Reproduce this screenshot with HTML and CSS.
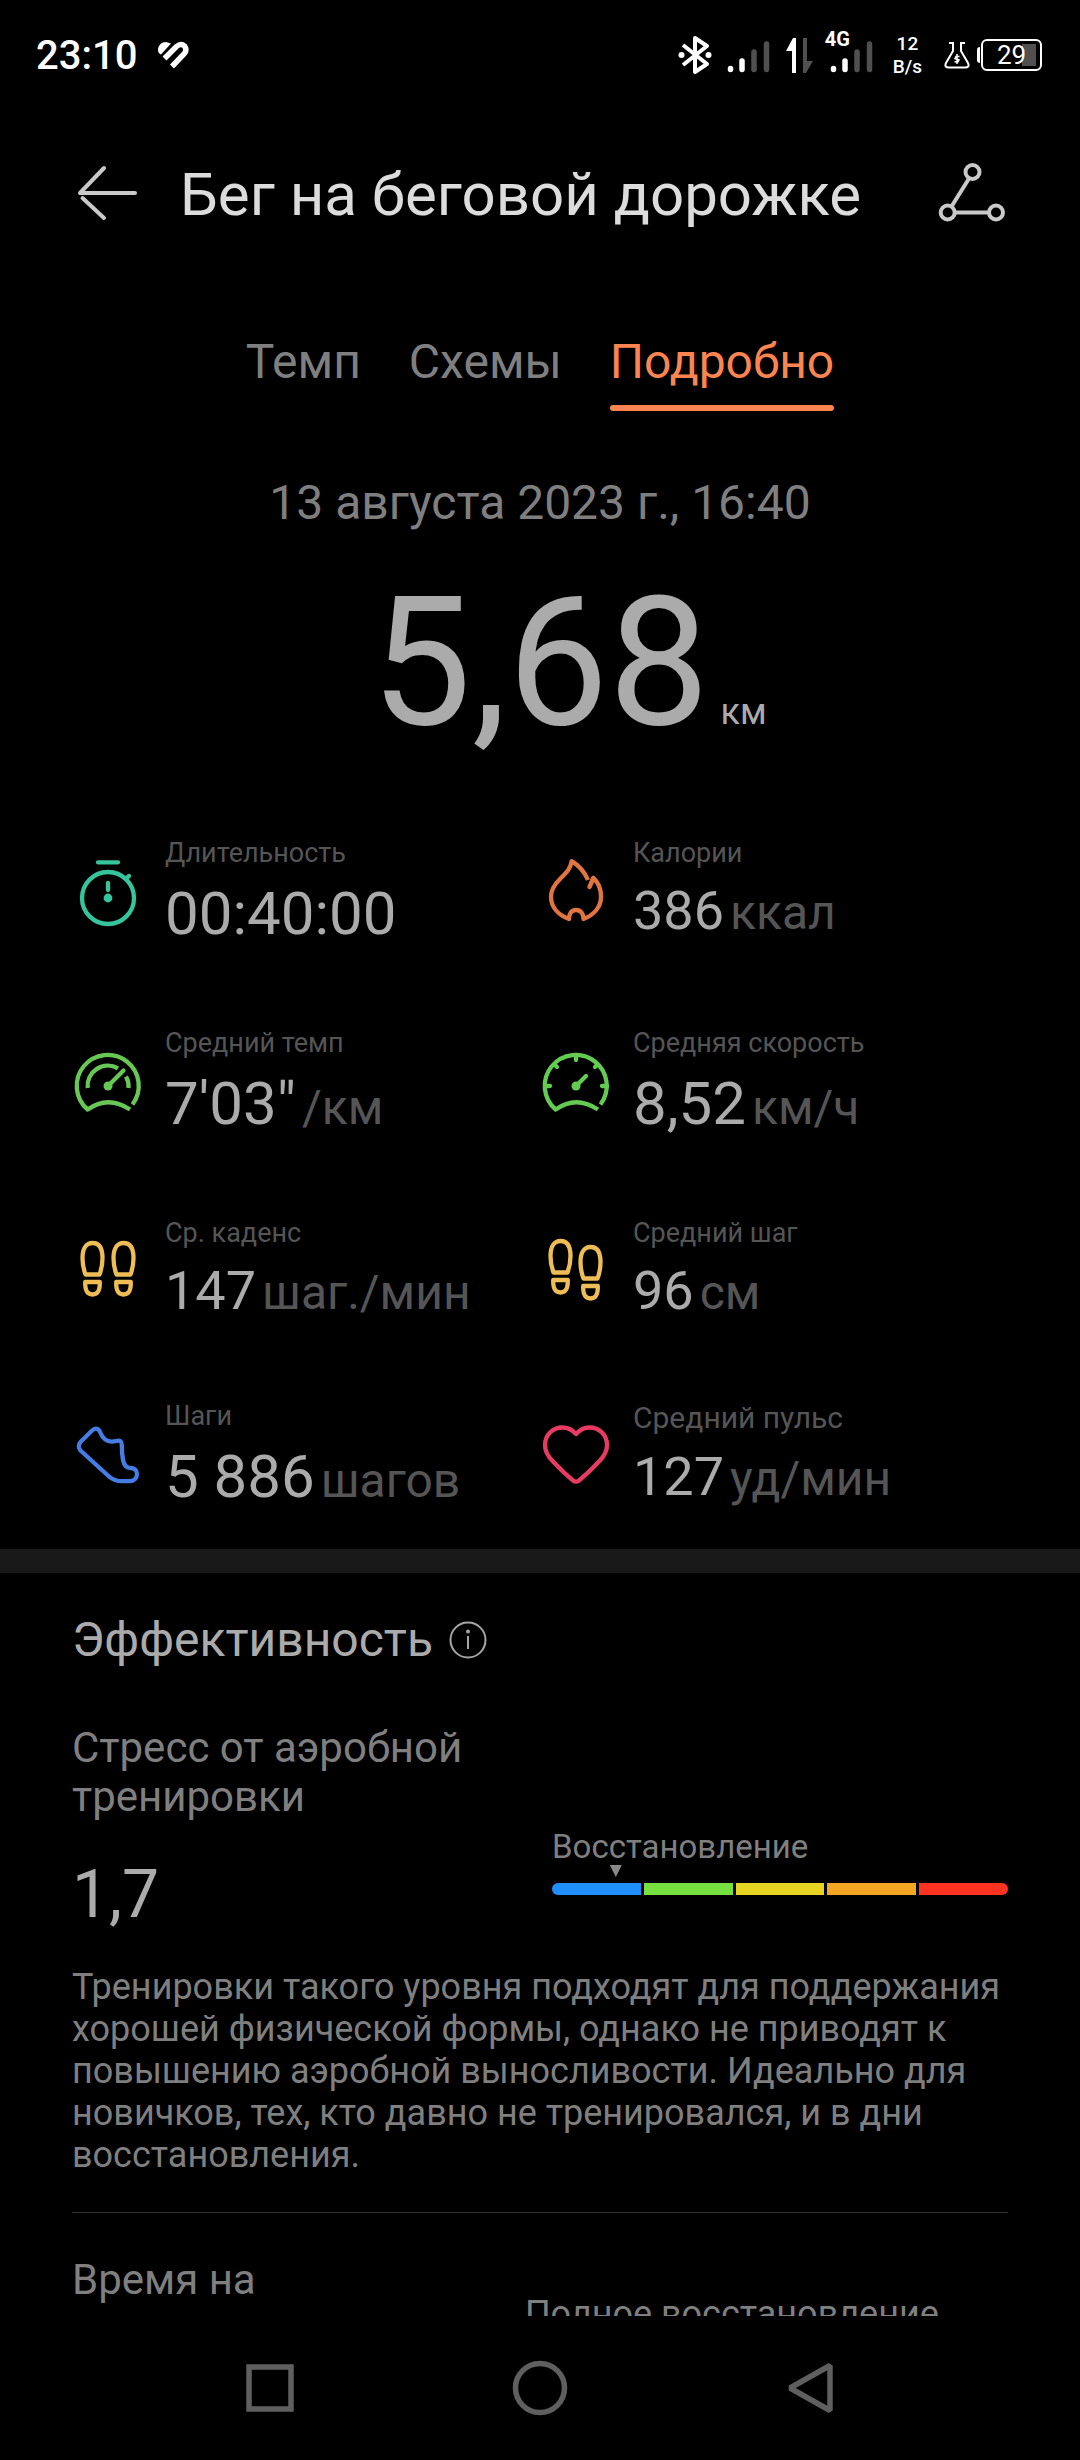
FILE: index.html
```html
<!DOCTYPE html>
<html lang="ru">
<head>
  <meta charset="UTF-8">
  <title>Бег на беговой дорожке</title>
  <meta name="viewport" content="width=device-width, initial-scale=1.0">
  <link rel="stylesheet" href="styles.css">
</head>
<body>

<!-- Status bar -->
<div class="status">
  <span class="clock">23:10</span>
  <svg class="health" width="32" height="28" viewBox="0 0 32 28">
    <path d="M1 9C1 4.500 4.500 1 9 1L14 2.500L4 13.500C2 12.500 1 11 1 9Z" fill="#fff"/>
    <path d="M7.500 17.500L19.500 5.500Q24 1.800 27.500 5Q30.500 9 27 13L15 25.500" fill="none" stroke="#fff" stroke-width="5.500"/>
  </svg>
  <div class="status-icons">
    <svg width="34" height="40" viewBox="0 0 34 40" fill="none" stroke="#fff" stroke-width="4" stroke-linejoin="round">
      <path d="M5 10L29 29L17 37V3L29 11L5 30"/>
      <circle cx="3.500" cy="20" r="3" fill="#fff" stroke="none"/>
      <circle cx="30.500" cy="20" r="3" fill="#fff" stroke="none"/>
    </svg>
    <svg class="signal" width="43" height="40" viewBox="0 0 43 40" stroke-width="5.500" stroke-linecap="round">
      <path d="M3.500 33.500V34.500M15 26V34.500" stroke="#fff"/>
      <path d="M27 17V34.500M39.500 9V34.500" stroke="#505050"/>
    </svg>
    <svg class="arrows" width="28" height="40" viewBox="0 0 28 40">
      <path d="M0 16L7 3H10V38H6V16Z" fill="#fff"/>
      <path d="M17 3H21V26H27L20 38H17Z" fill="#505050"/>
    </svg>
    <div class="lte">
      <svg width="50" height="40" viewBox="-5 0 50 40" stroke-width="5.500" stroke-linecap="round">
        <path d="M3.500 33.500V34.500M15 26V34.500" stroke="#fff"/>
        <path d="M27 17V34.500M39.500 9V34.500" stroke="#505050"/>
      </svg>
      <span class="lte-label">4G</span>
    </div>
    <div class="speed">12<br>B/s</div>
    <svg class="flask" width="26" height="28" viewBox="0 0 26 28" fill="none" stroke="#fff" stroke-width="2">
      <path d="M5 2H9V10L2 22Q0 26.500 5 26.500H21Q26 26.500 24 22L17 10V2H21"/>
      <path d="M13 13V23M15.500 15.500H12L11 17.500L15 19L14 20.800H10.500" stroke-width="1.500"/>
    </svg>
    <div class="battery">29</div>
  </div>
</div>

<header class="topbar">
  <button class="icon-btn" aria-label="Назад">
    <svg width="72" height="72" viewBox="0 0 72 72" fill="none" stroke="#c9c9c9" stroke-width="4" stroke-linecap="round" stroke-linejoin="round">
      <path d="M32 11L8 36H63M10.500 41L32 61"/>
    </svg>
  </button>
  <h1>Бег на беговой дорожке</h1>
  <button class="icon-btn" aria-label="Поделиться">
    <svg width="72" height="72" viewBox="0 0 72 72" fill="none" stroke="#c9c9c9" stroke-width="4">
      <circle cx="36.500" cy="15" r="7"/>
      <circle cx="11.700" cy="55.500" r="7"/>
      <circle cx="60" cy="55.500" r="7"/>
      <path d="M33 21.500L15.500 49.500M19 55.500H53"/>
    </svg>
  </button>
</header>

<main>
  <nav class="tabs">
    <a href="#pace">Темп</a>
    <a href="#charts">Схемы</a>
    <a href="#details" class="active">Подробно</a>
  </nav>

  <p class="date">13 августа 2023 г., 16:40</p>

  <div class="distance">
    <span class="distance-value">5,68</span>
    <span class="distance-unit">км</span>
  </div>

  <!-- Workout numbers -->
  <section class="stats">
    <div class="stat">
      <svg width="72" height="72" viewBox="0 0 72 72" fill="none" stroke="#35c49b" stroke-width="4.300" stroke-linecap="round">
        <circle cx="36" cy="41" r="26"/>
        <path d="M26 5.300H46M54 21.500L57 19M36 26V33" />
        <circle cx="36" cy="41" r="4.400" fill="#35c49b" stroke="none"/>
      </svg>
      <div>
        <div class="label">Длительность</div>
        <div class="value big">00:40:00</div>
      </div>
    </div>

    <div class="stat">
      <svg width="72" height="72" viewBox="0 0 72 72" fill="none" stroke="#e27441" stroke-width="4.300" stroke-linejoin="round">
        <path d="M48 26C44.500 18 39 11.500 31.700 7.200C30.500 15 26 19 20 25C14 31 11 36 11 42.500C11 53 18 61 29 65C29 60 31 56 36 56C41 56 43.500 60 43.500 65C54 61 61 53 61 43C61 35 58 28 53.300 24L49.500 33"/>
        <path d="M53.300 24L49.500 33" stroke-linecap="round"/>
      </svg>
      <div>
        <div class="label">Калории</div>
        <div class="value">386<span class="unit">ккал</span></div>
      </div>
    </div>

    <div class="stat">
      <svg width="72" height="72" viewBox="0 0 72 72" fill="none" stroke="#68c856" stroke-width="4.300" stroke-linejoin="round">
        <path d="M60.500 57.500A31 31 0 1 0 15.700 62.500Q36 48 58 62.500"/>
        <path d="M15.700 41A20.300 20.300 0 0 1 46 21.300M54 29.500Q57 35 56.500 41"/>
        <path d="M36 39L51.500 23.500" stroke-linecap="round"/>
        <circle cx="36" cy="39" r="4.500" fill="#68c856" stroke="none"/>
      </svg>
      <div>
        <div class="label">Средний темп</div>
        <div class="value big">7'03"<span class="unit">/км</span></div>
      </div>
    </div>

    <div class="stat">
      <svg width="72" height="72" viewBox="0 0 72 72" fill="none" stroke="#64cb52" stroke-width="4.300" stroke-linejoin="round">
        <path d="M60.500 57.500A31 31 0 1 0 15.700 62.500Q36 48 58 62.500"/>
        <path d="M36 8V13M5 39H10M62 39H67M15 18L17 20M57 18L55 20M36 39L46 29" stroke-linecap="round"/>
        <circle cx="36" cy="39" r="4.500" fill="#64cb52" stroke="none"/>
      </svg>
      <div>
        <div class="label">Средняя скорость</div>
        <div class="value big">8,52<span class="unit">км/ч</span></div>
      </div>
    </div>

    <div class="stat">
      <svg width="72" height="72" viewBox="0 0 72 72" fill="none" stroke="#eebd55" stroke-width="4.300" stroke-linejoin="round">
        <defs>
          <g id="foot">
            <path d="M13.500 40.500C11 34 10.500 29 10.500 24C10.500 14 14.500 9 20.500 9C27 9 30.500 14 30.500 24C30.500 29 30 34 27.500 40.500Z"/>
            <path d="M13.200 48H27.800C28 56 26 60.500 20.500 60.500C15 60.500 13 56 13.200 48Z"/>
          </g>
        </defs>
        <use href="#foot"/>
        <use href="#foot" x="31"/>
      </svg>
      <div>
        <div class="label">Ср. каденс</div>
        <div class="value">147<span class="unit">шаг./мин</span></div>
      </div>
    </div>

    <div class="stat">
      <svg width="72" height="72" viewBox="0 0 72 72" fill="none" stroke="#eebd55" stroke-width="4.300" stroke-linejoin="round">
        <use href="#foot" y="-2"/>
        <use href="#foot" x="30" y="4"/>
      </svg>
      <div>
        <div class="label">Средний шаг</div>
        <div class="value">96<span class="unit">см</span></div>
      </div>
    </div>

    <div class="stat">
      <svg width="72" height="72" viewBox="0 0 72 72" fill="none" stroke="#447de3" stroke-width="4.300" stroke-linejoin="round">
        <path d="M20 10.500L8.500 22C6.300 24.500 6.300 28 8.500 30.500L37 56.500C41 60 45 61.200 50 61.200H57C62 61.200 65 58 65 54C65 50 62 48 58.500 48C54 48 52 45 51 40C50 35 49.800 30 49.800 25C49.800 21 48 20 44 21C36 23 31 19 28.500 13C27 8.500 23.500 7 20 10.500Z"/>
      </svg>
      <div>
        <div class="label">Шаги</div>
        <div class="value big">5 886<span class="unit">шагов</span></div>
      </div>
    </div>

    <div class="stat">
      <svg width="72" height="72" viewBox="0 0 72 72" fill="none" stroke="#e93b61" stroke-width="4.300" stroke-linejoin="round">
        <path d="M36 16C32 11.500 27.500 9.500 22.500 9.500C12.500 9.500 5 17 5 27C5 34 8.500 39 13 43.500C19 50 25 56 33 62.500C35 64 37 64 39 62.500C47 56 53 50 59 43.500C63.500 39 67 34 67 27C67 17 59.500 9.500 49.500 9.500C44.500 9.500 40 11.500 36 16Z"/>
      </svg>
      <div>
        <div class="label label-large">Средний пульс</div>
        <div class="value">127<span class="unit">уд/мин</span></div>
      </div>
    </div>
  </section>

  <!-- Training effect -->
  <section class="effect">
    <h2>
      Эффективность
      <button class="info" aria-label="Информация">
        <svg width="40" height="40" viewBox="0 0 40 40" fill="none" stroke="#a5a5a5" stroke-width="2">
          <circle cx="20" cy="20" r="17.500"/>
          <path d="M20 16V29"/>
          <circle cx="20" cy="11.500" r="2" fill="#a5a5a5" stroke="none"/>
        </svg>
      </button>
    </h2>

    <div class="effect-row">
      <div>
        <h3>Стресс от аэробной тренировки</h3>
        <div class="score">1,7</div>
      </div>
      <div class="meter">
        <div class="meter-label">Восстановление</div>
        <div class="scale">
          <span class="marker" style="left: 14%"></span>
          <span class="seg blue"></span>
          <span class="seg green"></span>
          <span class="seg yellow"></span>
          <span class="seg orange"></span>
          <span class="seg red"></span>
        </div>
      </div>
    </div>

    <p class="hint">Тренировки такого уровня подходят для поддержания хорошей физической формы, однако не приводят к повышению аэробной выносливости. Идеально для новичков, тех, кто давно не тренировался, и в дни восстановления.</p>

    <div class="recovery">
      <h3>Время на восстановление</h3>
      <div class="recovery-label">Полное восстановление</div>
    </div>
  </section>
</main>

<!-- System navigation -->
<footer class="sysnav">
  <button aria-label="Недавние">
    <svg width="60" height="60" viewBox="0 0 60 60" fill="none" stroke="#5f5f5f" stroke-width="5.500"><rect x="9" y="9" width="42" height="42"/></svg>
  </button>
  <button aria-label="Домой">
    <svg width="60" height="60" viewBox="0 0 60 60" fill="none" stroke="#5f5f5f" stroke-width="5.500"><circle cx="30" cy="30" r="24.500"/></svg>
  </button>
  <button aria-label="Назад">
    <svg width="60" height="60" viewBox="0 0 60 60" fill="none" stroke="#5f5f5f" stroke-width="5.500" stroke-linejoin="bevel"><path d="M50 7.500V52.500L10 30Z"/></svg>
  </button>
</footer>

</body>
</html>
```
FILE: styles.css
```css
* {
  box-sizing: border-box;
}
body {
  margin: 0;
  height: 100vh;
  display: flex;
  flex-direction: column;
  background: #000;
  color: #ababab;
  font-family: Roboto, sans-serif;
  overflow: hidden;
}
h1, h2, h3, p {
  margin: 0;
  font-weight: 400;
}
button {
  padding: 0;
  border: none;
  background: none;
  cursor: pointer;
}
svg {
  display: block;
  flex: none;
}

/* Status bar */
.status {
  display: flex;
  align-items: center;
  height: 110px;
  padding: 0 38px 0 36px;
  color: #fff;
}
.clock {
  font-size: 40px;
  font-weight: 500;
}
.health {
  margin-left: 20px;
}
.status-icons {
  display: flex;
  align-items: center;
  margin-left: auto;
}
.signal {
  margin-left: 15px;
}
.arrows {
  margin-left: 16px;
}
.lte {
  position: relative;
  margin-left: 11px;
}
.lte-label {
  position: absolute;
  left: 0;
  top: -8px;
  font-size: 20px;
  line-height: 24px;
  font-weight: 700;
}
.speed {
  margin-left: 18px;
  font-size: 19px;
  line-height: 23px;
  font-weight: 500;
  text-align: center;
}
.flask {
  margin-left: 22px;
}
.battery {
  position: relative;
  width: 61px;
  height: 32px;
  margin-left: 11px;
  border: 2px solid #fff;
  border-radius: 6px;
  background: linear-gradient(#505050, #505050) right 4px center / 14px 22px no-repeat;
  font-size: 26px;
  line-height: 29px;
  padding-left: 14px;
}
.battery::before {
  content: "";
  position: absolute;
  left: -6px;
  top: 6px;
  width: 3px;
  height: 16px;
  border-radius: 3px 0 0 3px;
  background: #fff;
}

/* Title row */
.topbar {
  display: flex;
  align-items: center;
  gap: 36px;
  height: 166px;
  padding: 0 72px;
}
.topbar h1 {
  flex: 1;
  padding-top: 4px;
  font-size: 60px;
  line-height: 70px;
  color: #dcdcdc;
  white-space: nowrap;
}

main {
  flex: 1;
  min-height: 0;
  overflow: hidden;
  padding-top: 58px;
}
.tabs {
  display: flex;
  justify-content: center;
  gap: 48px;
}
.tabs a {
  padding-bottom: 15px;
  border-bottom: 6px solid transparent;
  font-size: 48px;
  line-height: 56px;
  color: #7f7f7f;
  text-decoration: none;
}
.tabs .active {
  position: relative;
  color: #fb8450;
}
.tabs .active::after {
  content: "";
  position: absolute;
  left: 0;
  right: 0;
  bottom: -6px;
  height: 6px;
  border-radius: 3px;
  background: #fb8450;
}
.date {
  margin-top: 64px;
  font-size: 48px;
  line-height: 56px;
  color: #7f7f7f;
  text-align: center;
}
.distance {
  display: grid;
  grid-template-columns: 1fr auto 1fr;
  align-items: baseline;
  column-gap: 11px;
  margin-top: 26px;
}
.distance-value {
  grid-column: 2;
  font-size: 180px;
  line-height: 212px;
}
.distance-unit {
  font-size: 36px;
}

/* Workout numbers */
.stats {
  display: grid;
  grid-template-columns: 1fr 1fr;
  align-items: start;
  row-gap: 78px;
  margin-top: 68px;
  padding: 0 72px 37px;
  border-bottom: 24px solid #181818;
}
.stat {
  display: flex;
  align-items: center;
  gap: 21px;
  white-space: nowrap;
}
.label {
  margin-bottom: 10px;
  font-size: 27px;
  line-height: 32px;
  color: #555;
}
.label-large {
  font-size: 30px;
  line-height: 35px;
}
.value {
  font-size: 54px;
  line-height: 63px;
}
.value.big {
  font-size: 60px;
  line-height: 70px;
}
.unit {
  margin-left: 6px;
  font-size: 48px;
  line-height: 1;
  color: #555;
}

/* Training effect */
.effect {
  padding: 39px 72px 0;
}
.effect h2 {
  display: flex;
  align-items: center;
  gap: 15px;
  font-size: 48px;
  line-height: 56px;
}
.effect h3 {
  font-size: 42px;
  line-height: 49px;
  color: #7f7f7f;
}
.effect-row {
  display: grid;
  grid-template-columns: 1fr 1fr;
  align-items: end;
  column-gap: 24px;
  margin-top: 55px;
}
.score {
  margin-top: 35px;
  font-size: 66px;
  line-height: 77px;
}
.meter {
  padding-bottom: 38px;
}
.meter-label {
  margin-bottom: 17px;
  font-size: 33px;
  line-height: 39px;
  color: #7f7f7f;
}
.scale {
  position: relative;
  display: flex;
  gap: 3px;
  height: 12px;
}
.seg {
  flex: 1;
}
.blue {
  background: #1f8fff;
  border-radius: 6px 0 0 6px;
}
.green {
  background: #76e041;
}
.yellow {
  background: #e7d422;
}
.orange {
  background: #f5a623;
}
.red {
  background: #ff3320;
  border-radius: 0 6px 6px 0;
}
.marker {
  position: absolute;
  top: -18px;
  width: 12px;
  height: 12px;
  margin-left: -6px;
  background: #8a8a8a;
  clip-path: polygon(0 0, 100% 0, 50% 100%);
}
.hint {
  margin-top: 33px;
  padding-bottom: 36px;
  border-bottom: 1px solid #333;
  font-size: 36px;
  line-height: 42px;
  color: #7f7f7f;
}
.recovery {
  display: grid;
  grid-template-columns: 15fr 16fr;
  align-items: start;
  margin-top: 42px;
}
.recovery-label {
  padding-top: 38px;
  font-size: 36px;
  line-height: 42px;
  color: #7f7f7f;
}

/* System navigation */
.sysnav {
  display: flex;
  height: 144px;
  padding: 0 12.5%;
}
.sysnav button {
  flex: 1;
  display: flex;
  align-items: center;
  justify-content: center;
}
```
